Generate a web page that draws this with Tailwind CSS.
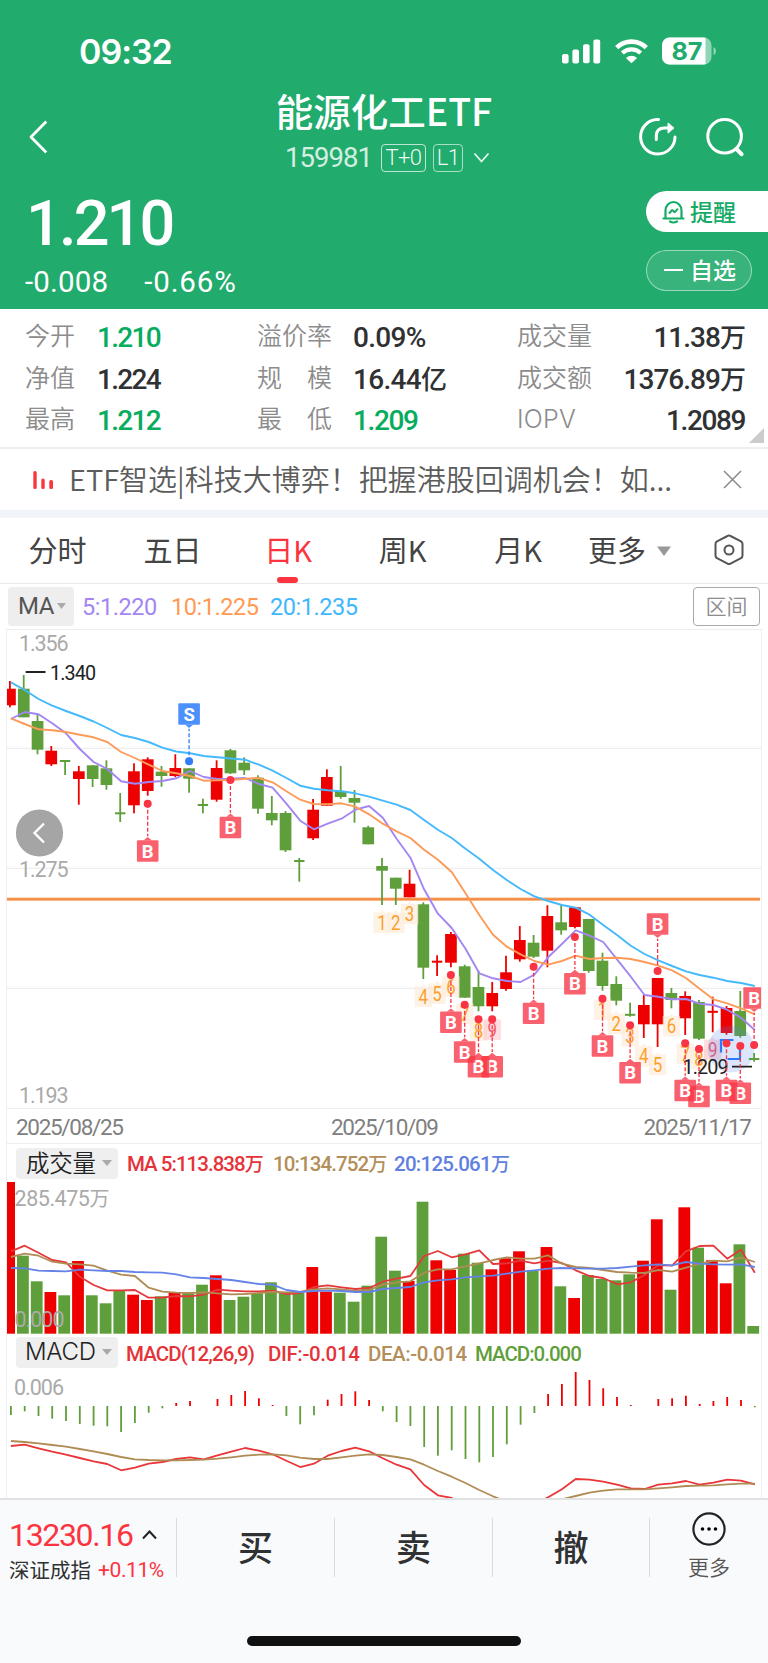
<!DOCTYPE html>
<html lang="zh-CN">
<head>
<meta charset="utf-8">
<title>能源化工ETF</title>
<script src="https://cdn.jsdelivr.net/npm/@tailwindcss/browser@4"></script>
</head>
<body class="w-[768px] bg-white font-['Roboto','Noto_Sans_CJK_SC',sans-serif] leading-none text-[#303133] overflow-x-hidden">
<div class="flex h-[1663px] w-[768px] flex-col overflow-hidden">

<!-- header -->
<header class="flex h-[309px] shrink-0 flex-col bg-[#21ab6d] text-white">
  <div class="flex h-[85px] justify-between pt-[34px]">
    <span class="pl-[79px] font-['Inter',sans-serif] text-[34px] font-semibold leading-[36px] tracking-[-0.03em]">09:32</span>
    <div class="flex h-[34px] items-center pr-[51px]">
      <svg width="39" height="25" viewBox="0 0 39 25" fill="#fff"><rect x="0" y="15" width="6.6" height="9.4" rx="2"/><rect x="10.4" y="10.4" width="6.6" height="14" rx="2"/><rect x="21" y="5.3" width="6.6" height="19" rx="2"/><rect x="31.4" y="0.4" width="6.8" height="24" rx="2"/></svg>
      <svg class="ml-[13px]" width="35" height="25" viewBox="0 0 35 25" fill="none" stroke="#fff"><path d="M2.7 8.7a21 21 0 0 1 29.6 0" stroke-width="4.6"/><path d="M8.3 14a13.4 13.4 0 0 1 18.4 0" stroke-width="4.2"/><path d="M17.500 24.300 11.900 18.900Q17.500 14.600 23.100 18.900Z" fill="#fff" stroke="none"/></svg>
      <svg class="ml-[13px]" width="55" height="28" viewBox="0 0 55 28"><defs><clipPath id="bat"><rect x="0" y="0.500" width="49.500" height="27" rx="7.500"/></clipPath></defs><g clip-path="url(#bat)"><rect width="50" height="28" fill="#fff" fill-opacity=".5"/><rect width="43.500" height="28" fill="#fff"/></g><path d="M51.500 10v8q2.500-1 2.500-4t-2.500-4z" fill="#fff" fill-opacity=".5"/><text x="9.500" y="22.500" font-family="Inter" font-weight="700" font-size="24" textLength="31" lengthAdjust="spacingAndGlyphs" fill="#21ab6d">87</text></svg>
    </div>
  </div>
  <div class="flex h-[103px] items-center justify-between">
    <div class="w-[180px] pl-[28px]"><svg width="20" height="34" viewBox="0 0 20 34" fill="none" stroke="#fff" stroke-width="2.800" stroke-linecap="square" stroke-linejoin="round"><path d="M17.300 2.500 3 17l14.300 14.500"/></svg></div>
    <div class="flex h-[103px] flex-col items-center">
      <h1 class="h-[52px] font-['Noto_Sans_CJK_SC',sans-serif] text-[37.500px] font-medium leading-[50px]">能源化工ETF</h1>
      <div class="flex h-[42px] items-center pl-[7px]">
        <span class="text-[27.500px] tracking-[-0.035em] text-white/80">159981</span>
        <span class="ml-[9px] flex h-[28px] w-[45px] items-center justify-center rounded-[4px] border border-white/70 text-[22px] font-light tracking-[-0.03em] text-white/95">T+0</span>
        <span class="ml-[7px] flex h-[28px] w-[30px] items-center justify-center rounded-[4px] border border-white/60 text-[22px] font-light tracking-[-0.03em] text-white/95">L1</span>
        <svg class="ml-[10px]" width="17" height="12" viewBox="0 0 17 12" fill="none" stroke="#fff" stroke-opacity=".9" stroke-width="1.800"><path d="M1.500 1.500 8.500 9.500 15.500 1.500"/></svg>
      </div>
    </div>
    <div class="flex w-[180px] justify-end gap-[28px] pr-[24px]">
      <svg width="40" height="40" viewBox="0 0 40 40" fill="none" stroke="#fff" stroke-width="3" stroke-linecap="round" stroke-linejoin="round"><path d="M20.500 2.600H19.300A17.200 17.200 0 1 0 37 20"/><path d="M18.300 22.500v-3.500q0-8 8-8h8"/><path d="m30.300 6.500 4.800 4.500-4.800 4.500z" fill="#fff" stroke-width="1.600"/></svg>
      <svg width="38" height="40" viewBox="0 0 38 40" fill="none" stroke="#fff" stroke-width="3" stroke-linecap="round"><circle cx="18.600" cy="19.300" r="16.800"/><path d="m30.500 32 5 5.200" stroke-width="4"/></svg>
    </div>
  </div>
  <div class="flex flex-1 justify-between">
    <div class="pl-[25px]">
      <div class="h-[74px] pt-[4px] pl-[1px] text-[63px] font-medium leading-[64px] tracking-[-0.045em]">1.210</div>
      <div class="flex gap-[36px] text-[29.500px] leading-[41px]"><span class="tracking-[0.005em]">-0.008</span><span class="tracking-[0.030em]">-0.66%</span></div>
    </div>
    <div class="flex w-[122px] flex-col pt-[3px] font-['Noto_Sans_CJK_SC',sans-serif] text-[23px] font-medium">
      <div class="flex h-[41px] items-center rounded-l-full bg-white pl-[16px] text-[#14ab66]">
        <svg class="mr-[5px]" width="23" height="24" viewBox="0 0 23 24" fill="none" stroke="#14ab66" stroke-width="2.200" stroke-linejoin="round" stroke-linecap="round"><path d="M3.500 18V10.500a8 8.500 0 0 1 16 0V18M1.500 18.500h20M8 21.500q3.500 2 7 0"/><path d="m7.500 13 2.700-3 2.600 2.200 2.700-3" stroke-width="2"/></svg>提醒
      </div>
      <div class="mt-[18px] flex h-[41px] w-[106px] items-center rounded-full border border-white/50 bg-white/10 pb-[2px] pl-[17px]"><span class="mr-[7px] h-[2px] w-[19px] bg-white"></span>自选</div>
    </div>
  </div>
</header>

<!-- quote figures -->
<section class="relative grid h-[138px] shrink-0 grid-cols-[72px_160px_96px_164px_90px_138px] grid-rows-[41px_41px_41px] gap-y-[0.500px] pl-[25px] pt-[6px] text-[28px] font-medium leading-[46px] tracking-[-0.035em]">
  <span class="font-['Noto_Sans_CJK_SC',sans-serif] text-[25px] font-[350] leading-[39px] tracking-normal text-[#8c8c8c]">今开</span><span class="tracking-[-0.060em] text-[#08ac5e]">1.210</span>
  <span class="font-['Noto_Sans_CJK_SC',sans-serif] text-[25px] font-[350] leading-[39px] tracking-normal text-[#8c8c8c]">溢价率</span><span class="tracking-[-0.025em]">0.09%</span>
  <span class="font-['Noto_Sans_CJK_SC',sans-serif] text-[25px] font-[350] leading-[39px] tracking-normal text-[#8c8c8c]">成交量</span><span class="text-right">11.38<span class="text-[26px]">万</span></span>
  <span class="font-['Noto_Sans_CJK_SC',sans-serif] text-[25px] font-[350] leading-[39px] tracking-normal text-[#8c8c8c]">净值</span><span class="tracking-[-0.060em]">1.224</span>
  <span class="flex w-[75px] justify-between font-['Noto_Sans_CJK_SC',sans-serif] text-[25px] font-[350] leading-[39px] tracking-normal text-[#8c8c8c]"><i class="not-italic">规</i><i class="not-italic">模</i></span><span class="tracking-[-0.025em]">16.44<span class="text-[26px]">亿</span></span>
  <span class="font-['Noto_Sans_CJK_SC',sans-serif] text-[25px] font-[350] leading-[39px] tracking-normal text-[#8c8c8c]">成交额</span><span class="text-right">1376.89<span class="text-[26px]">万</span></span>
  <span class="font-['Noto_Sans_CJK_SC',sans-serif] text-[25px] font-[350] leading-[39px] tracking-normal text-[#8c8c8c]">最高</span><span class="tracking-[-0.060em] text-[#08ac5e]">1.212</span>
  <span class="flex w-[75px] justify-between font-['Noto_Sans_CJK_SC',sans-serif] text-[25px] font-[350] leading-[39px] tracking-normal text-[#8c8c8c]"><i class="not-italic">最</i><i class="not-italic">低</i></span><span class="tracking-[-0.050em] text-[#08ac5e]">1.209</span>
  <span class="font-['Inter',sans-serif] text-[25px] font-light leading-[42px] tracking-[0.010em] text-[#8c8c8c]">IOPV</span><span class="text-right tracking-[-0.05em]">1.2089</span>
  <svg class="absolute bottom-[4px] right-[4px]" width="15" height="15"><path d="M15 0V15H0z" fill="#ccc"/></svg>
</section>

<!-- notice -->
<section class="flex h-[63px] shrink-0 items-center border-t-2 border-[#efefef] pl-[33px] font-['Noto_Sans_CJK_SC',sans-serif] text-[29px] font-[350] text-[#5c5c5c]">
  <svg width="21" height="18" viewBox="0 0 21 18" fill="#f93540"><rect x="0.300" y="0" width="3.400" height="18" rx="1.500"/><rect x="8.300" y="7.500" width="3.400" height="10.500" rx="1.500"/><rect x="16.300" y="9" width="3.700" height="9" rx="1.500"/></svg>
  <span class="ml-[15px] w-[612px] whitespace-nowrap pb-[4px] leading-[40px]">ETF智选|科技大博弈！把握港股回调机会！如...</span>
  <svg class="ml-[42px]" width="19" height="19" viewBox="0 0 19 19" stroke="#888" stroke-width="1.500"><path d="m1 1 17 17M18 1 1 18"/></svg>
</section>
<div class="h-[8px] shrink-0 bg-[#f1f4f9]"></div>

<!-- period tabs -->
<nav class="flex h-[66px] shrink-0 items-center border-b border-[#e9e9e9] font-['Noto_Sans_CJK_SC',sans-serif] text-[29px] text-[#444]">
  <span class="w-[115px] pb-[2px] text-center">分时</span>
  <span class="w-[115px] pb-[2px] text-center">五日</span>
  <span class="relative flex h-full w-[116px] items-center justify-center pb-[2px] text-[#fb3440]">日K<span class="absolute bottom-0 left-[47px] h-[6px] w-[21px] rounded-[3px] bg-[#fb3440]"></span></span>
  <span class="w-[113px] pb-[2px] text-center">周K</span>
  <span class="w-[118px] pb-[2px] text-center">月K</span>
  <span class="ml-[11px] w-[69px] pb-[2px]">更多</span>
  <svg width="14" height="10"><path d="M0 .5h14L7 10z" fill="#999"/></svg>
  <svg class="mb-px ml-[43px]" width="30" height="32" viewBox="0 0 30 32" fill="none" stroke="#555" stroke-width="2" stroke-linejoin="round"><path d="M15 1.500 Q15.800 1.500 16.500 2L27 7.300Q28.500 8.300 28.500 10V21.500Q28.500 23.200 27 24.200L16.500 29.600Q15 30.500 13.500 29.600L3 24.200Q1.500 23.200 1.500 21.500V10Q1.500 8.300 3 7.300L13.500 2Q14.200 1.500 15 1.500Z"/><circle cx="15" cy="16" r="4.500"/></svg>
</nav>

<!-- moving-average legend -->
<div class="flex h-[45px] shrink-0 items-center pb-px pl-[8px] pr-[8px] text-[23.500px] tracking-[-0.02em]">
  <span class="flex h-[39px] w-[66px] items-center rounded-[4px] bg-[#eee] pl-[10px] text-[24px] tracking-[-0.02em] text-[#555]">MA<svg class="ml-[3px]" width="9" height="6"><path d="M0 0h9L4.500 6z" fill="#aaa"/></svg></span>
  <span class="ml-[8px] w-[89px] pt-[3px] text-[#a386f2]">5:1.220</span>
  <span class="w-[99px] pt-[3px] text-[#ff9a55]">10:1.225</span>
  <span class="w-[100px] pt-[3px] text-[#40b7fc]">20:1.235</span>
  <span class="ml-auto flex h-[39px] w-[67px] items-center justify-center rounded-[4px] border border-[#aaa] pb-px font-['Noto_Sans_CJK_SC',sans-serif] text-[21px] font-[350] tracking-normal text-[#8c8c8c]">区间</span>
</div>

<!-- charts -->
<main class="mx-[6px] flex h-[869px] shrink-0 flex-col overflow-hidden border-x border-[#eee]">
  <svg id="price" class="block shrink-0 overflow-visible" width="754" height="514" viewBox="7 629 754 514"></svg>
  <div class="flex h-[39px] shrink-0 items-center border-t border-[#eee] pl-[9px] text-[20.500px] font-medium tracking-[-0.012em]">
    <span class="flex h-[31px] w-[102px] items-center rounded-[4px] bg-[#efefef] pb-px pl-[10px] font-['Noto_Sans_CJK_SC',sans-serif] text-[23.500px] font-[350] text-[#222]">成交量<svg class="ml-[6px]" width="10" height="6"><path d="M0 0h10L5 6z" fill="#aaa"/></svg></span>
    <span class="ml-[9px] w-[146px] pt-[3px] tracking-[-0.048em] text-[#e5333a]">MA 5:113.838<span class="text-[19px]">万</span></span>
    <span class="w-[121px] pt-[3px] tracking-[-0.044em] text-[#b48e58]">10:134.752<span class="text-[19px]">万</span></span>
    <span class="pt-[3px] tracking-[-0.036em] text-[#607fe0]">20:125.061<span class="text-[19px]">万</span></span>
  </div>
  <svg id="volume" class="block shrink-0 overflow-visible" width="754" height="152" viewBox="7 1182 754 152"></svg>
  <div class="flex h-[37px] shrink-0 items-center pl-[9px] text-[20.500px] font-medium">
    <span class="flex h-[31px] w-[102px] items-center rounded-[4px] bg-[#efefef] pb-px pl-[9px] font-['Inter',sans-serif] text-[24px] font-light tracking-[-0.01em] text-[#222]">MACD<svg class="ml-[6px]" width="10" height="6"><path d="M0 0h10L5 6z" fill="#aaa"/></svg></span>
    <span class="ml-[8px] w-[142px] pt-[3px] tracking-[-0.045em] text-[#e5333a]">MACD(12,26,9)</span>
    <span class="w-[100px] pt-[3px] tracking-[-0.018em] text-[#e5333a]">DIF:-0.014</span>
    <span class="w-[107px] pt-[3px] tracking-[-0.022em] text-[#b48e58]">DEA:-0.014</span>
    <span class="pt-[3px] tracking-[-0.050em] text-[#5f9f3b]">MACD:0.000</span>
  </div>
  <svg id="macd" class="block shrink-0" width="754" height="127" viewBox="7 1371 754 127"></svg>
</main>

<!-- bottom bar -->
<footer class="flex h-[165px] shrink-0 flex-col border-t-2 border-[#e1e1e3] bg-[#f9fafc]">
  <div class="flex h-[94px] items-center">
    <div class="w-[176px] pl-[9px] pt-[7px]">
      <div class="flex items-center whitespace-nowrap text-[32px] leading-[38px] tracking-[-0.042em] text-[#fb3440]">13230.16<svg class="ml-[9px]" width="15" height="10" viewBox="0 0 15 10" fill="none" stroke="#222" stroke-width="2"><path d="M1 8.500 7.500 1.500 14 8.500"/></svg></div>
      <div class="flex whitespace-nowrap leading-[30px]"><span class="font-['Noto_Sans_CJK_SC',sans-serif] text-[20.500px]">深证成指</span><span class="ml-[7px] pt-px text-[21px] tracking-[-0.02em] text-[#fb3440]">+0.11%</span></div>
    </div>
    <div class="flex h-[59px] w-[158px] items-center justify-center border-l border-[#dcdcde] pb-[4px] font-['Noto_Sans_CJK_SC',sans-serif] text-[35px] font-medium">买</div>
    <div class="flex h-[59px] w-[158px] items-center justify-center border-l border-[#dcdcde] pb-[4px] font-['Noto_Sans_CJK_SC',sans-serif] text-[35px] font-medium">卖</div>
    <div class="flex h-[59px] w-[157px] items-center justify-center border-l border-[#dcdcde] pb-[4px] font-['Noto_Sans_CJK_SC',sans-serif] text-[35px] font-medium">撤</div>
    <div class="flex h-[59px] flex-1 flex-col items-center justify-center border-l border-[#dcdcde]">
      <svg class="shrink-0" width="34" height="34" viewBox="0 0 34 34"><circle cx="17" cy="17" r="15.600" fill="none" stroke="#222" stroke-width="2.200"/><circle cx="10.500" cy="17" r="1.800"/><circle cx="17" cy="17" r="1.800"/><circle cx="23.500" cy="17" r="1.800"/></svg>
      <span class="mt-[4px] font-['Noto_Sans_CJK_SC',sans-serif] text-[21px] font-[350] leading-[32px] text-[#555]">更多</span>
    </div>
  </div>
  <div class="mx-auto mt-[42px] h-[10px] w-[274px] rounded-full bg-[#111]"></div>
</footer>
</div>

<script>
const STEP = 13.775, RED = '#ee0000', GREEN = '#5f9f3b';
const lineX = i => 10.9 + STEP * i;
const fixed = n => n.toFixed(1);
const path = (ys, color, width) =>
  `<polyline fill="none" stroke="${color}" stroke-width="${width}" stroke-linejoin="round" points="${ys.map((y, i) => fixed(lineX(i)) + ',' + fixed(y)).join(' ')}"/>`;
const label = (x, y, s, w, size, color) =>
  `<text x="${x}" y="${y}" font-size="${size}" fill="${color}" textLength="${w}">${s}</text>`;

// [up, high, bodyTop, bodyBottom, low]
const candles = [
[1,681,688.7,705.3,707.3],[0,675,688.7,717.3,717.3],[0,714,721,749.7,754.3],[1,746,750.7,764.3,766],[0,760,760,761.5,775],
[1,766,771.3,779,804.7],[0,765.3,765.3,779,787],[0,760.3,768.3,785,789.7],[0,793,812.3,814.3,822],[1,763.3,771.3,805.3,813.3],
[1,757.3,759.3,791,795.7],[0,766,771.7,776,786.7],[1,754.3,768,776,777],[0,768.3,768.3,778.7,792.7],[0,798.7,804,806,813.3],
[1,760.3,768,799.7,801.7],[0,749,750.3,773.3,774],[0,757.3,762.7,770.3,775],[0,775.3,777.7,808.7,813.7],[0,796,813,820.3,825.3],
[0,811,813,850.3,852],[0,858,860,862,881.7],[1,799,809.7,838.3,840],[1,769.3,777,805.7,805.7],[0,766,791,797,798.7],
[0,790,798,802.7,822.7],[0,825.7,827.3,844.3,844.3],[0,858,866,870.7,905],[0,877.7,877.7,888.7,905],[1,869.7,883.7,897.3,897.3],
[0,902.3,904.3,967.7,979],[1,955.3,960.7,962.7,976],[1,932,934,962.7,967.3],[0,964.7,966.3,997.7,997.7],[0,970.7,987,1006.3,1011.3],
[1,982,993,1006.3,1011.3],[1,955.7,972.3,989,990.7],[1,926,940,959.3,961.7],[0,935,942.7,956.7,958],[1,905.3,916,950.7,967.3],
[0,904.7,922.3,930.3,934.7],[1,907.3,907.3,927,928.3],[0,919,919,971,972.7],[0,952.7,960.7,986,990.7],[0,976.3,984,1000.7,1005.3],
[0,1002.7,1013.8,1015.5,1016.7],[1,995,1005,1024.3,1038],[1,978,978,1024.3,1047],[0,988,993,1000,1008.3],[1,991.3,996,1018.3,1035],
[0,1000,1002,1038.7,1040],[1,996.7,1010.8,1012.5,1032.3],[1,1006,1008,1033,1034.7],[0,991,1011,1036,1037.7],[0,1053,1058,1060,1061.7]];
const ma20 = [682.3,690,699,705.7,711,716,721.5,728,735,738,742,747.7,751.5,753.3,756,757.3,758.5,759.7,764.7,770.7,778,785.7,788.7,790.3,791.3,793.3,796.7,800.7,804.7,810,820,829.7,838,848.7,858.7,870,880,889,896.3,901,905,907.7,914.7,925,935,945.7,954,960.3,966,971.3,975,977.7,981,983,986];
const ma10 = [718.3,724,729.3,730.3,732,734.7,737.3,742,752,758,764.7,771,773.3,776,780.7,780.3,780,778.7,778,782.3,791.3,799.7,804,804.3,803.3,806.7,814.3,823.7,831.3,838,849.7,859.7,872,893.3,915,934.7,946.7,954.3,961,964.7,961,955.7,959,958,957.7,959,962,965.7,970.3,978,988.7,999.3,1003.3,1008.3,1014.3];
const ma5 = [719,712,714.3,723.3,733.3,749,762,769,781.3,783.7,782,781,778.3,771,777,779,778.7,778,784,787.7,803.7,820.7,829.3,823.7,818.7,809.7,806,817.7,838.7,857.7,889.3,913.7,928,948.7,973.3,978.3,981,982,974.7,957.3,944,930.3,935.7,942,959.3,976.7,995,996.7,999.3,999,1003.7,1005,1009.7,1017.7,1030];
// [index, centreY, digit]
const counts = [[27,922,1],[28,922,2],[29,913.5,3],[30,996,4],[31,993,5],[32,986,6],[33,1013,7],[34,1030,8],[35,1029,9],
[43,1009,1],[44,1023,2],[45,1035.5,3],[46,1055.5,4],[47,1064,5],[48,1025.5,6],[49,1053,7],[50,1058.5,8],[51,1049,9]];
// [index, dotY, badgeCentreY, letter]
const trades = [[10,803.7,851,'B'],[16,780,827.5,'B'],[13,761.3,714,'S'],[32,975,1022.3,'B'],[35,1019.3,1066.7,'B'],[34,1019.3,1066.7,'B'],[33,1004.7,1052,'B'],
[38,966.7,1013.4,'B'],[41,937,983.7,'B'],[43,998.7,1046,'B'],[45,1025.3,1072.7,'B'],[47,971,924,'B'],[50,1049,1096.5,'B'],[49,1043.3,1090.5,'B'],[53,1046,1093.3,'B'],[52,1043.3,1090.5,'B'],[54,1045,998,'B']];

let g = '';
for (const y of [629.5, 748.3, 868.3, 988.3, 1108.5]) g += `<path d="M7 ${y}H761" stroke="#eeeeee" stroke-width="1.200"/>`;
g += label(19, 650.8, '1.356', 49.5, 21.5, '#aaa') + label(19, 876.8, '1.275', 49.5, 21.5, '#aaa') + label(19, 1103, '1.193', 49.5, 21.5, '#aaa');
g += label(16, 1135, '2025/08/25', 108, 22.5, '#808080') + label(331, 1135, '2025/10/09', 108, 22.5, '#808080') + label(643.5, 1135, '2025/11/17', 108.5, 22.5, '#808080');
g += '<path d="M6 899.200H760" stroke="#fdb98a" stroke-width="3.400"/><path d="M6 899.200H760" stroke="#f5893f" stroke-width="1.800"/>';
candles.forEach(([up, hi, top, bot, low], i) => {
  const x = 9.95 + 13.78 * i, c = up ? RED : GREEN, thin = bot - top < 2.2;
  const w = thin ? 10.4 : 11.7, l = i ? x - w / 2 : 6.3, r = x + w / 2;
  const h = Math.max(bot - top, 2);
  g += `<rect x="${fixed(x - .9)}" y="${hi}" width="1.800" height="${fixed(low - hi)}" fill="${c}"/><rect x="${fixed(l)}" y="${top}" width="${fixed(r - l)}" height="${fixed(h)}" fill="${c}"/>`;
});
g += path(ma5, '#a386f2', 1.9) + path(ma10, '#fc9b58', 1.9) + path(ma20, '#44b9fc', 1.9);
for (const [i, y, n] of counts) {
  const x = 9.95 + 13.78 * i, hot = n === 9;
  g += `<path d="M${fixed(x - 8.7)} ${y - 9.5}h6.500l2.200-2.600 2.200 2.600h6.500v20.500h-17.400z" fill="${hot ? '#fdb5bd' : '#fdebd8'}" fill-opacity="${hot ? .45 : .65}"/><text x="${fixed(x)}" y="${y + 7.5}" font-size="21" text-anchor="middle" textLength="9.500" lengthAdjust="spacingAndGlyphs" fill="${hot ? '#f4586a' : '#fba02c'}">${n}</text>`;
}
// focus ring near the latest candle
g += '<circle cx="731" cy="1049" r="23.500" fill="#4a82f0" fill-opacity=".2"/><path d="M721 1052.500V1040H733.500M727.500 1059H740V1046.500" fill="none" stroke="#2c7bff" stroke-width="2.200"/>';
g += '<path d="M25.700 672H45.500M732 1066.700H752" stroke="#222" stroke-width="1.800"/>' + label(50, 679.5, '1.340', 46, 19.8, '#222') + label(682.5, 1074.3, '1.209', 46, 19.8, '#222');
for (const [i, dot, cy, s] of trades) {
  const x = 9.95 + 13.78 * i, sell = s === 'S', down = cy < dot;
  const c = sell ? '#2f7df8' : '#f83445', edge = down ? cy + 10.7 : cy - 10.7, k = down ? 1 : -1;
  g += `<path d="M${fixed(x)} ${dot}V${fixed(edge + 4 * k)}" stroke="${c}" stroke-width="1.300" stroke-dasharray="4 2"/><circle cx="${fixed(x)}" cy="${dot}" r="4" fill="${c}"/>`;
  g += `<g fill="${sell ? '#4c90fc' : c}" fill-opacity="${sell ? 1 : .78}"><rect x="${fixed(x - 10.8)}" y="${fixed(cy - 10.7)}" width="21.600" height="21.400" rx="1"/><path d="M${fixed(x - 4)} ${fixed(edge)}h8l-4 ${3.2 * k}z"/></g>`;
  g += `<text x="${fixed(x)}" y="${cy + 6.6}" text-anchor="middle" font-size="18.5" font-weight="700" fill="#fff">${s}</text>`;
}
// scroll-back button
g += '<circle cx="39.500" cy="833" r="23.600" fill="#a5a5a5"/><path d="M44 823.500 34.500 833 44 842.500" fill="none" stroke="#fff" stroke-width="2.400"/>';
document.getElementById('price').innerHTML = g;

// volume, in thirds of a pixel below y = 1090
const vol = [276,497,574,606,616,513,616,640,602,614,630,619,608,610,584,556,630,620,610,577,606,608,531,605,608,635,587,440,542,573,335,511,540,491,518,538,505,484,542,471,589,624,555,567,571,553,512,388,599,352,473,511,580,463,708];
const v5 = [484,467,488,510,517,560,585,601,601,600,623,623,618,619,614,599,602,604,604,602,612,609,591,586,592,597,594,575,566,558,498,483,502,493,481,522,520,512,520,512,519,541,558,564,583,577,555,525,527,484,468,467,506,479,548];
const v10 = [501,491,497,515,521,523,527,542,554,558,593,605,608,609,607,610,613,612,609,606,607,606,598,595,598,603,600,584,577,574,548,538,538,529,520,510,502,506,506,496,521,531,534,540,546,548,549,540,545,533,522,512,514,503,516];
const v20 = [534,535,542,543,544,539,541,543,543,546,547,548,553,562,564,567,570,576,582,584,600,606,603,602,603,606,606,597,594,591,577,571,568,562,559,557,551,545,541,536,534,535,536,536,534,530,526,523,526,516,521,523,524,523,531];
const red = new Set([0,3,5,9,10,12,15,22,23,29,31,32,35,36,37,39,41,46,47,49,51,52]);
const vy = v => 1090 + v / 3;
let v = '';
vol.forEach((t, i) => {
  const x = 9.1 + 13.78 * i, l = i ? x - 5.9 : 6, r = x + 5.9;
  v += `<rect x="${fixed(l)}" y="${fixed(vy(t))}" width="${fixed(r - l)}" height="${fixed(1333.7 - vy(t))}" fill="${red.has(i) ? RED : GREEN}"/>`;
});
v += path(v5.map(vy), '#e5383b', 1.8) + path(v10.map(vy), '#b08c55', 1.8) + path(v20.map(vy), '#6583e6', 1.8);
v += label(14.5, 1205.7, '285.475<tspan font-size="20">万</tspan>', 95, 21.5, '#aaa') + label(14.5, 1326.7, '0.000', 50, 21.5, '#aaa');
document.getElementById('volume').innerHTML = v;

// MACD, in thirds of a pixel below y = 1330; zero line at 228
const hist = [255,244,258,266,273,282,287,289,306,279,248,235,219,213,228,207,195,183,205,225,258,283,256,209,192,184,210,244,276,288,351,377,361,387,397,381,343,284,249,192,162,126,150,175,201,225,228,207,205,197,222,213,201,210,232];
const dif = [348,344,355,365,374,384,394,402,421,413,401,396,387,382,388,376,365,354,362,373,392,411,401,377,363,353,364,385,404,418,465,496,504,530,545,550,545,540,522,502,478,447,449,455,464,475,477,464,460,453,464,458,449,452,463];
const dea = [333,336,340,345,350,357,364,372,381,388,390,391,391,390,389,386,382,377,374,373,376,383,387,387,382,377,373,375,381,388,404,423,440,459,480,499,515,525,525,520,508,498,488,482,478,478,478,475,472,468,467,466,463,461,461];
const my = n => 1330 + n / 3;
let m = '';
hist.forEach((n, i) => {
  if (n === 228) return;
  m += `<rect x="${fixed(lineX(i) - .9)}" y="${fixed(my(Math.min(n, 228)))}" width="1.800" height="${fixed(Math.abs(n - 228) / 3)}" fill="${n < 228 ? RED : GREEN}"/>`;
});
m += path(dif.map(my), '#ea3539', 1.8) + path(dea.map(my), '#b08c55', 1.8) + label(14, 1394.5, '0.006', 50, 21.5, '#aaa');
document.getElementById('macd').innerHTML = m;
</script>
</body>
</html>
